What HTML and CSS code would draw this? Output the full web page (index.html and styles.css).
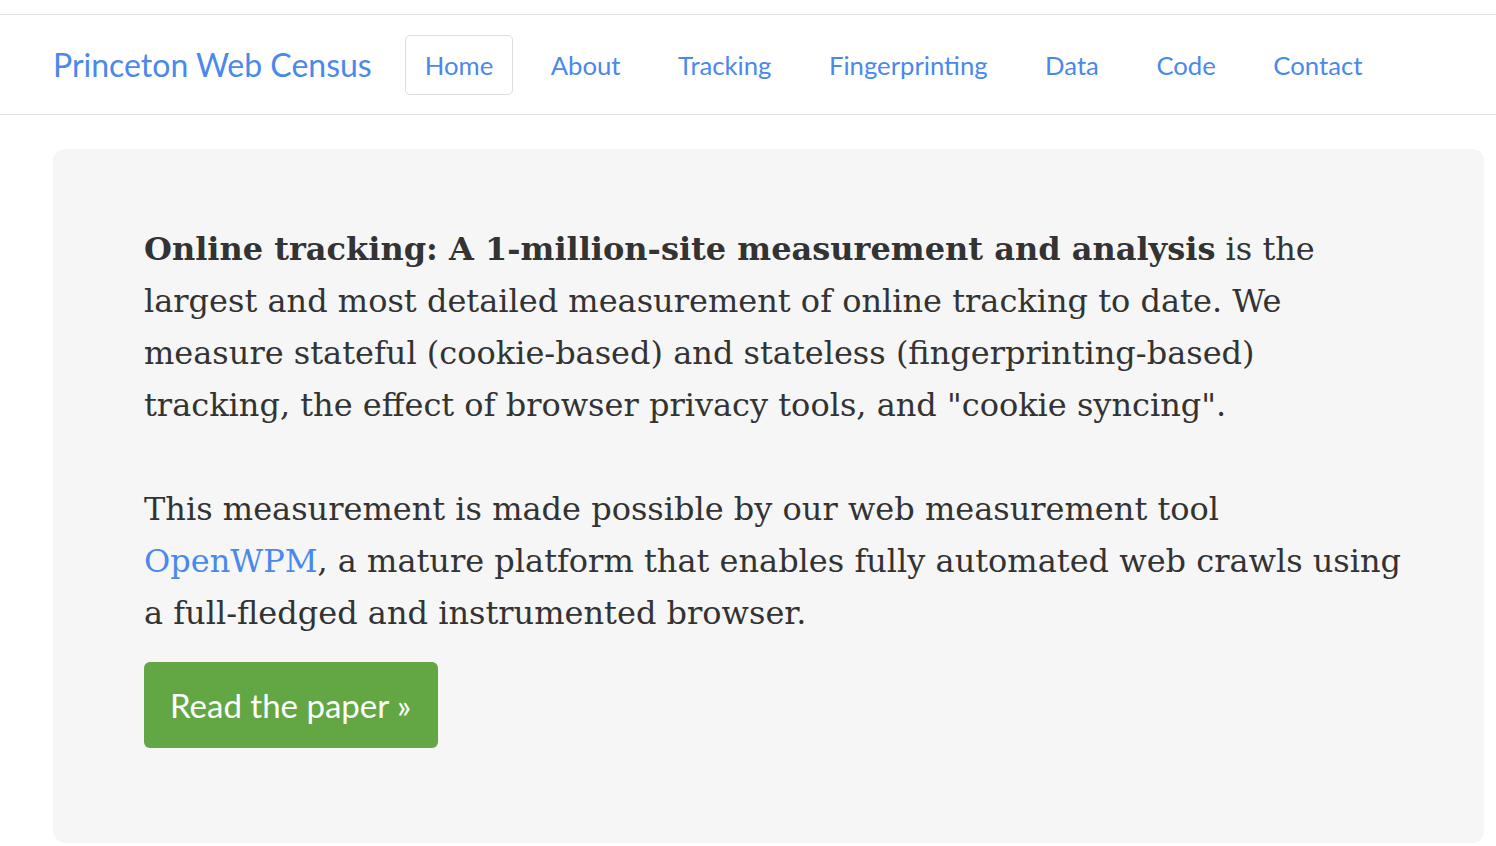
FILE: index.html
```html
<!DOCTYPE html>
<html>
<head>
<meta charset="utf-8">
<title>Princeton Web Census</title>
<link rel="stylesheet" href="styles.css">
</head>
<body>
<header class="navbar">
  <a class="brand" href="#">Princeton Web Census</a>
  <nav class="nav">
    <a class="nav-link active" href="#">Home</a>
    <a class="nav-link" href="#">About</a>
    <a class="nav-link" href="#">Tracking</a>
    <a class="nav-link" href="#">Fingerprinting</a>
    <a class="nav-link" href="#">Data</a>
    <a class="nav-link" href="#">Code</a>
    <a class="nav-link" href="#">Contact</a>
  </nav>
</header>
<main class="container">
  <section class="jumbotron">
    <p><strong>Online tracking: A 1-million-site measurement and analysis</strong> is the largest and most detailed measurement of online tracking to date. We measure stateful (cookie-based) and stateless (fingerprinting-based) tracking, the effect of browser privacy tools, and "cookie syncing".</p>
    <p>This measurement is made possible by our web measurement tool <a href="#">OpenWPM</a>, a mature platform that enables fully automated web crawls using a full-fledged and instrumented browser.</p>
    <a class="btn" href="#">Read the paper &raquo;</a>
  </section>
</main>
</body>
</html>
```

FILE: styles.css
```css
html, body {
  margin: 0;
  padding: 0;
  background: #ffffff;
}
body {
  padding-top: 14px;
  font-family: "DejaVu Serif", "Liberation Serif", serif;
  color: #333333;
}
a {
  color: #4a88ec;
  text-decoration: none;
}
.navbar {
  display: flex;
  align-items: center;
  height: 99px;
  border-top: 1px solid #e2e2e2;
  border-bottom: 1px solid #e2e2e2;
  padding-left: 53px;
  font-family: "Lato", "Open Sans", sans-serif;
}
.brand {
  font-size: 32px;
  margin-right: 33px;
}
.nav {
  display: flex;
  gap: 17.5px;
}
.nav-link {
  font-size: 25.7px;
  line-height: 32px;
  padding: 13px 19px;
  border: 1px solid transparent;
  border-radius: 5px;
}
.nav-link.active {
  border-color: #dddddd;
}
.container {
  padding: 34px 12px 0 53px;
}
.jumbotron {
  background: #f6f6f6;
  border-radius: 12px;
  padding: 74px 76px 95px 91px;
}
.jumbotron p {
  margin: 0 0 52px 0;
  font-size: 32px;
  line-height: 52px;
}
.jumbotron p:last-of-type {
  margin-bottom: 23px;
}
.btn {
  display: inline-block;
  background: #62a744;
  color: #ffffff;
  font-family: "Lato", "Open Sans", sans-serif;
  font-size: 33px;
  line-height: 40px;
  padding: 23px 27px 23px 26px;
  border-radius: 6px;
}
```
